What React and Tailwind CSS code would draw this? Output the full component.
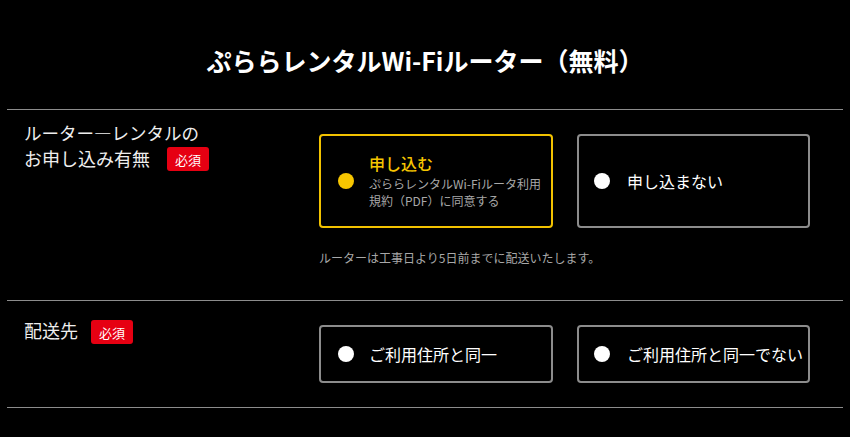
export default function App() {
  const font = { fontFamily: '"Noto Sans CJK JP", "Noto Sans", sans-serif' };
  return (
    <div className="min-h-[437px] w-full bg-black text-white" style={font}>
      <h1 className="pt-[44px] text-center text-[25px] font-bold leading-[32px]">
        ぷららレンタルWi-Fiルーター（無料）
      </h1>
      <div className="mx-[7px] mt-[33px] border-t border-[#8c8c8c]">
        {/* Section 1 */}
        <div className="flex border-b border-[#8c8c8c] pb-[34px]">
          <div className="w-[312px] shrink-0 pl-[17px] pt-[11px]">
            <div className="text-[17.5px] leading-[24px] text-[#eeeeee]">ルーター―レンタルの</div>
            <div className="flex items-center text-[18px] leading-[24px] text-[#eeeeee]">
              <span>お申し込み有無</span>
              <span className="ml-[17px] mt-[2px] flex h-[24px] w-[42px] items-center justify-center rounded-[3px] bg-[#e60012] text-[13px] leading-none text-white">
                必須
              </span>
            </div>
          </div>
          <div className="pt-[24px]">
            <div className="flex gap-[24px]">
              <div className="flex h-[94px] w-[234px] items-center rounded-[4px] border-2 border-[#f2c200] pl-[17px]">
                <span className="h-[16px] w-[16px] shrink-0 rounded-full bg-[#f7c600]" />
                <div className="ml-[15px]">
                  <div className="text-[16px] font-medium leading-[20px] text-[#f7c600]">申し込む</div>
                  <div className="mt-[2px] text-[12px] leading-[17px] text-[#a8a8a8]">
                    ぷららレンタルWi-Fiルータ利用
                    <br />
                    規約（PDF）に同意する
                  </div>
                </div>
              </div>
              <div className="flex h-[94px] w-[233px] items-center rounded-[4px] border-2 border-[#8c8c8c] pl-[15px]">
                <span className="h-[16px] w-[16px] shrink-0 rounded-full bg-white" />
                <div className="ml-[17px] text-[16px] leading-[20px] text-white">申し込まない</div>
              </div>
            </div>
            <p className="mt-[22px] text-[12px] leading-[16px] text-[#a8a8a8]">
              ルーターは工事日より5日前までに配送いたします。
            </p>
          </div>
        </div>
        {/* Section 2 */}
        <div className="flex border-b border-[#8c8c8c] pb-[24px]">
          <div className="w-[312px] shrink-0 pl-[17px] pt-[14px]">
            <div className="flex items-center text-[18px] leading-[24px] text-[#eeeeee]">
              <span>配送先</span>
              <span className="ml-[13px] mt-[5px] flex h-[24px] w-[42px] items-center justify-center rounded-[3px] bg-[#e60012] text-[13px] leading-none text-white">
                必須
              </span>
            </div>
          </div>
          <div className="flex gap-[24px] pt-[24px]">
            <div className="flex h-[58px] w-[234px] items-center rounded-[4px] border-2 border-[#8c8c8c] pl-[17px]">
              <span className="h-[16px] w-[16px] shrink-0 rounded-full bg-white" />
              <div className="ml-[15px] text-[16px] leading-[20px] text-white">ご利用住所と同一</div>
            </div>
            <div className="flex h-[58px] w-[233px] items-center rounded-[4px] border-2 border-[#8c8c8c] pl-[15px]">
              <span className="h-[16px] w-[16px] shrink-0 rounded-full bg-white" />
              <div className="ml-[17px] text-[16px] leading-[20px] text-white">ご利用住所と同一でない</div>
            </div>
          </div>
        </div>
      </div>
    </div>
  );
}
